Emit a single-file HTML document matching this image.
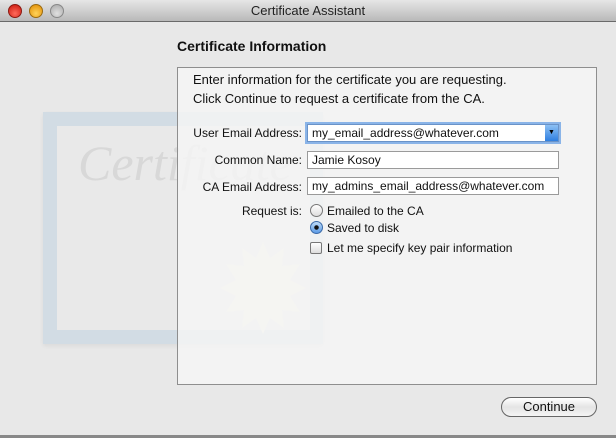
<!DOCTYPE html>
<html><head><style>
*{margin:0;padding:0;box-sizing:border-box}
body{width:616px;height:438px;background:#e8e8e8;font-family:"Liberation Sans","DejaVu Sans",sans-serif;position:relative;overflow:hidden;color:#111}
.tb{position:absolute;left:0;top:0;width:616px;height:22px;background:linear-gradient(#e6e6e6,#b9b9b9);border-bottom:1px solid #6a6a6a;text-align:center;font-size:13px;line-height:22px;color:#222}
.dot{position:absolute;top:4px;width:14px;height:14px;border-radius:50%}
.a{position:absolute}
.lbl{position:absolute;right:314px;font-size:12px;text-align:right;white-space:nowrap}
.fld{position:absolute;left:307px;width:252px;height:18px;background:#fff;border:1px solid #9a9a9a;font-size:12px;line-height:16px;padding-left:4px}
.opt{position:absolute;left:325px;font-size:12px;white-space:nowrap}
</style></head><body>
<div class="tb">Certificate Assistant</div>
<div class="dot" style="left:8px;background:radial-gradient(circle at 50% 70%,#ff6b5b,#c8140a);border:1px solid #8a1a12"></div>
<div class="dot" style="left:29px;background:radial-gradient(circle at 50% 70%,#ffd35a,#e08a00);border:1px solid #9a6a10"></div>
<div class="dot" style="left:50px;background:radial-gradient(circle at 50% 70%,#e0e0e0,#a8a8a8);border:1px solid #888"></div>

<div class="a" style="left:43px;top:112px;width:280px;height:232px;background:#d2dce4;box-shadow:0 2px 4px rgba(0,0,0,.06)"></div>
<div class="a" style="left:57px;top:126px;width:253px;height:204px;background:#e9e9e9"></div>
<div class="a" style="left:78px;top:134px;font-family:'Liberation Serif',serif;font-style:italic;font-size:50px;color:#d8d8d8">Certificate</div>
<svg class="a" style="left:220px;top:240px" width="86" height="96"><polygon points="43,2 50,18 64,8 62,26 80,24 70,40 86,48 70,56 80,72 62,70 64,88 50,78 43,94 36,78 22,88 24,70 6,72 16,56 0,48 16,40 6,24 24,26 22,8 36,18" fill="#f2f0e4"/></svg>

<div class="a" style="left:177px;top:38px;font-size:14px;font-weight:bold">Certificate Information</div>
<div class="a" style="left:177px;top:67px;width:420px;height:318px;border:1px solid #8e8e8e;background:rgba(245,245,245,.82)"></div>
<div class="a" style="left:193px;top:70px;font-size:13px;line-height:19px">Enter information for the certificate you are requesting.<br>Click Continue to request a certificate from the CA.</div>

<div class="lbl" style="top:126px">User Email Address:</div>
<div class="fld" style="top:124px;border-color:#6a93c8;box-shadow:0 0 0 2px #8ab4e8">my_email_address@whatever.com
<div style="position:absolute;right:0;top:0;width:13px;height:16px;background:linear-gradient(#8dc0f4,#2f7fe0);font-size:7px;color:#000;text-align:center;line-height:16px">▼</div></div>
<div class="lbl" style="top:153px">Common Name:</div>
<div class="fld" style="top:151px">Jamie Kosoy</div>
<div class="lbl" style="top:180px">CA Email Address:</div>
<div class="fld" style="top:177px">my_admins_email_address@whatever.com</div>
<div class="lbl" style="top:204px">Request is:</div>
<div class="a" style="left:310px;top:204px;width:13px;height:13px;border-radius:50%;border:1px solid #777;background:linear-gradient(#fff,#ddd)"></div>
<div class="opt" style="top:204px;left:327px">Emailed to the CA</div>
<div class="a" style="left:310px;top:221px;width:13px;height:13px;border-radius:50%;border:1px solid #3b6aa8;background:radial-gradient(circle,#111 0 2px,transparent 2.5px),linear-gradient(#bfdcf8,#5a9ae6)"></div>
<div class="opt" style="top:221px;left:327px">Saved to disk</div>
<div class="a" style="left:310px;top:242px;width:12px;height:12px;border:1px solid #777;border-radius:2px;background:linear-gradient(#fff,#ddd)"></div>
<div class="opt" style="top:241px;left:327px">Let me specify key pair information</div>

<div class="a" style="left:501px;top:397px;width:96px;height:20px;border:1px solid #666;border-radius:10px;background:linear-gradient(#fff,#e4e4e4 50%,#f4f4f4);font-size:13px;text-align:center;line-height:18px">Continue</div>
<div class="a" style="left:0;top:435px;width:616px;height:3px;background:#888"></div>
</body></html>
